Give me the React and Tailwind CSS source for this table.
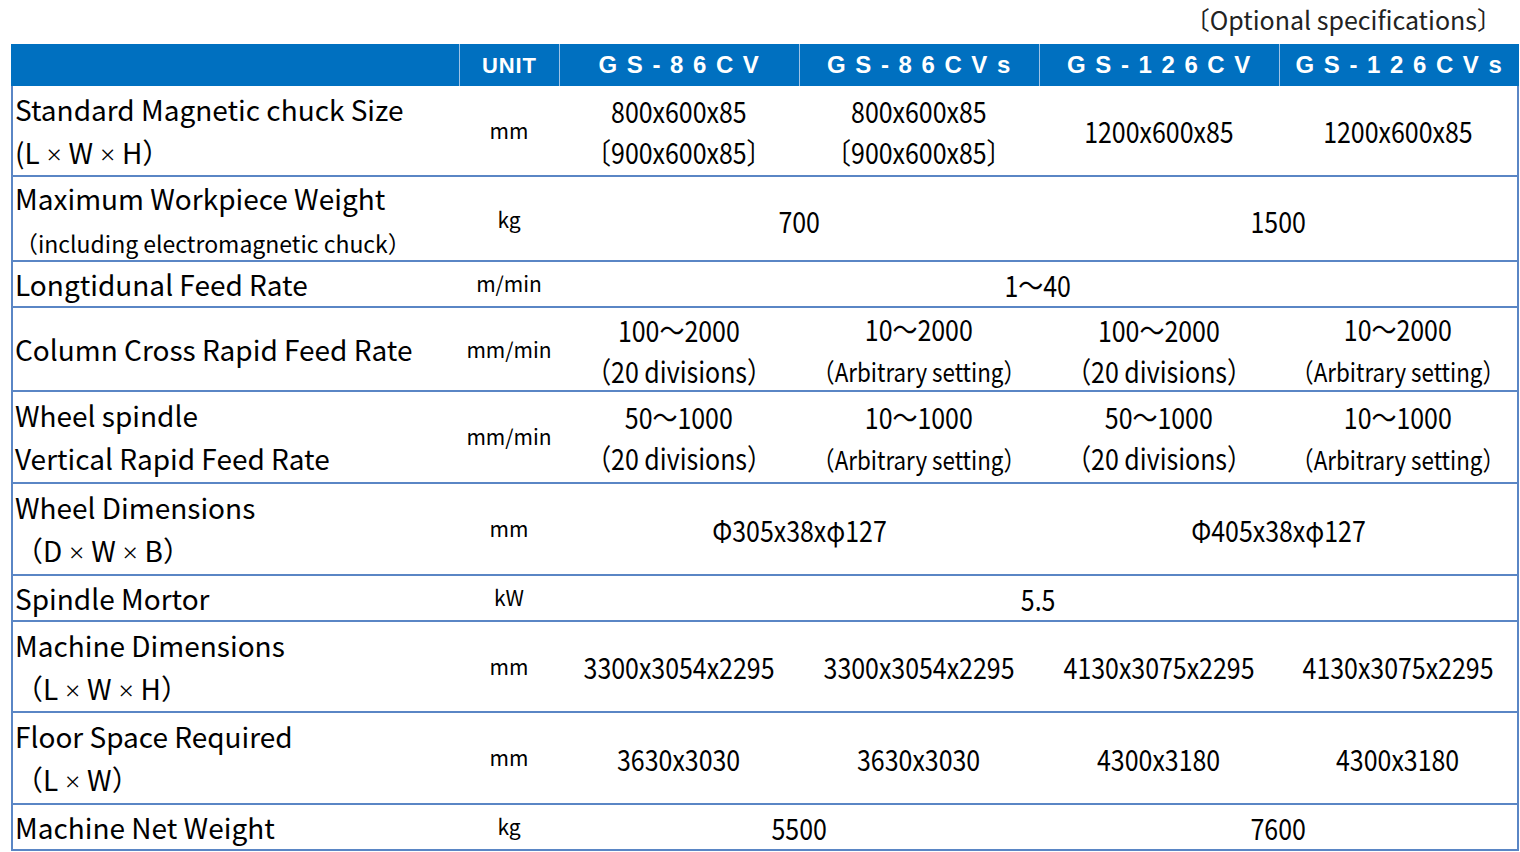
import React from "react";

const label = { fontFamily: '"Noto Sans CJK JP", "Noto Sans", sans-serif' };
const head = { fontFamily: '"Liberation Sans", Arial, sans-serif' };

const arb = (t) => <span className="text-[26px]">{t}</span>;

// latin multiplication sign, thinner than the CJK full-width one
const X = () => (
  <span className="inline-block mx-[7px] text-[26px] leading-none font-light align-baseline" style={{ fontFamily: '"Noto Sans", sans-serif' }}>
    ×
  </span>
);

const rows = [
  {
    h: "h-[91px]",
    label: [<>Standard Magnetic chuck Size</>, <>(L<X />W<X />H）</>],
    unit: "mm",
    cells: [
      { span: 1, lines: ["800x600x85", "〔900x600x85〕"] },
      { span: 1, lines: ["800x600x85", "〔900x600x85〕"] },
      { span: 1, lines: ["1200x600x85"] },
      { span: 1, lines: ["1200x600x85"] },
    ],
  },
  {
    h: "h-[85px]",
    label: [<>Maximum Workpiece Weight</>, <span className="text-[23px]">（including electromagnetic chuck）</span>],
    unit: "kg",
    cells: [
      { span: 2, lines: ["700"] },
      { span: 2, lines: ["1500"] },
    ],
  },
  {
    h: "h-[46px]",
    label: [<>Longtidunal Feed Rate</>],
    unit: "m/min",
    cells: [{ span: 4, lines: ["1～40"] }],
  },
  {
    h: "h-[84px]",
    label: [<>Column Cross Rapid Feed Rate</>],
    unit: "mm/min",
    cells: [
      { span: 1, lines: ["100～2000", "（20 divisions）"] },
      { span: 1, lines: ["10～2000", arb("（Arbitrary setting）")] },
      { span: 1, lines: ["100～2000", "（20 divisions）"] },
      { span: 1, lines: ["10～2000", arb("（Arbitrary setting）")] },
    ],
  },
  {
    h: "h-[92px]",
    label: [<>Wheel spindle</>, <>Vertical Rapid Feed Rate</>],
    unit: "mm/min",
    cells: [
      { span: 1, lines: ["50～1000", "（20 divisions）"] },
      { span: 1, lines: ["10～1000", arb("（Arbitrary setting）")] },
      { span: 1, lines: ["50～1000", "（20 divisions）"] },
      { span: 1, lines: ["10～1000", arb("（Arbitrary setting）")] },
    ],
  },
  {
    h: "h-[92px]",
    label: [<>Wheel Dimensions</>, <>（D<X />W<X />B）</>],
    unit: "mm",
    cells: [
      { span: 2, lines: ["Φ305x38xφ127"] },
      { span: 2, lines: ["Φ405x38xφ127"] },
    ],
  },
  {
    h: "h-[46px]",
    label: [<>Spindle Mortor</>],
    unit: "kW",
    cells: [{ span: 4, lines: ["5.5"] }],
  },
  {
    h: "h-[91px]",
    label: [<>Machine Dimensions</>, <>（L<X />W<X />H）</>],
    unit: "mm",
    cells: [
      { span: 1, lines: ["3300x3054x2295"] },
      { span: 1, lines: ["3300x3054x2295"] },
      { span: 1, lines: ["4130x3075x2295"] },
      { span: 1, lines: ["4130x3075x2295"] },
    ],
  },
  {
    h: "h-[92px]",
    label: [<>Floor Space Required</>, <>（L<X />W）</>],
    unit: "mm",
    cells: [
      { span: 1, lines: ["3630x3030"] },
      { span: 1, lines: ["3630x3030"] },
      { span: 1, lines: ["4300x3180"] },
      { span: 1, lines: ["4300x3180"] },
    ],
  },
  {
    h: "h-[46px]",
    label: [<>Machine Net Weight</>],
    unit: "kg",
    cells: [
      { span: 2, lines: ["5500"] },
      { span: 2, lines: ["7600"] },
    ],
  },
];

const spanClass = { 1: "col-span-1", 2: "col-span-2", 4: "col-span-4" };

const models = ["GS-86CV", "GS-86CVs", "GS-126CV", "GS-126CVs"];

export default function App() {
  return (
    <div className="w-[1520px] h-[852px] bg-white overflow-hidden text-black">
      <div className="h-[44px] flex items-start justify-end pr-[18px] pt-[2px] text-[25px] leading-[34px] text-[#222]" style={label}>
        〔Optional specifications〕
      </div>

      <div className="ml-[11px] w-[1508px]">
        <div className="grid grid-cols-[448px_100px_240px_240px_240px_240px] h-[42px] bg-[#0070c0] text-white font-bold" style={head}>
          <div />
          <div className="flex items-center justify-center border-l border-[#9ec3e6] text-[22px] tracking-[0.04em]">UNIT</div>
          {models.map((m) => (
            <div key={m} className="flex items-center justify-center border-l border-[#9ec3e6] text-[24px] tracking-[0.4em] pl-[8px]">
              {m}
            </div>
          ))}
        </div>

        <div className="border-l-2 border-r-2 border-[#5a86c5]">
          {rows.map((r, i) => (
            <div
              key={i}
              className={`grid grid-cols-[446px_100px_240px_240px_240px_238px] border-b-2 border-[#5a86c5] ${r.h}`}
            >
              <div className="flex flex-col justify-center pl-[2px] text-[28px] leading-[43px]" style={label}>
                {r.label.map((l, j) => (
                  <div key={j} className="h-[43px] whitespace-nowrap">{l}</div>
                ))}
              </div>
              <div className="flex items-center justify-center text-[21px]" style={label}>
                {r.unit}
              </div>
              {r.cells.map((c, j) => (
                <div
                  key={j}
                  className={`${spanClass[c.span]} flex flex-col items-center justify-center text-[29px] leading-[41px] whitespace-nowrap`}
                  style={label}
                >
                  {c.lines.map((l, k) => (
                    <div key={k} className="scale-x-[0.86]">{l}</div>
                  ))}
                </div>
              ))}
            </div>
          ))}
        </div>
      </div>
    </div>
  );
}
